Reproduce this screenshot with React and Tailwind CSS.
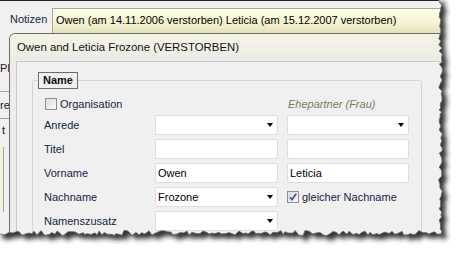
import React from "react";

// torn paper edge on the right and bottom of the screenshot
function tornPath() {
  let s = 11;
  const r = () => (s = (s * 16807) % 2147483647) / 2147483647;
  const pts = [
    [-3, -3],
    [441, -3],
  ];
  for (let y = 0; y <= 231; y += 2 + Math.floor(r() * 3)) pts.push([438.8 + r() * 3.6, y]);
  pts.push([441, 234]);
  for (let x = 437; x >= 0; x -= 2 + Math.floor(r() * 3)) pts.push([x, 230.5 + r() * 5]);
  pts.push([-3, 233]);
  return "M" + pts.map((p) => p[0].toFixed(1) + " " + p[1].toFixed(1)).join("L") + "Z";
}

const TORN = tornPath();

function TornEdge() {
  return (
    <svg className="absolute inset-0 pointer-events-none" width="461" height="255" viewBox="0 0 461 255">
      <defs>
        <mask id="outside">
          <rect x="0" y="0" width="461" height="255" fill="white" />
          <path d={TORN} fill="black" />
        </mask>
        <filter id="soft" x="-10%" y="-10%" width="130%" height="130%">
          <feGaussianBlur stdDeviation="2.4" />
        </filter>
      </defs>
      <path d={"M0 0H461V255H0Z" + TORN} fill="white" fillRule="evenodd" />
      <g mask="url(#outside)">
        <path d={TORN} transform="translate(5 5)" fill="#1a1a1a" opacity="0.9" filter="url(#soft)" />
      </g>
      <path d={TORN} fill="none" stroke="#6a6a6a" strokeWidth="0.8" />
    </svg>
  );
}

function Combo({ value, width }) {
  return (
    <div className={`h-[20px] ${width} flex items-center bg-white border border-[#dedede] rounded-[2px] pl-[2px] pr-[4px]`}>
      <span className="flex-1 text-[11px] text-black">{value}</span>
      <span className="w-0 h-0 border-l-[3.5px] border-r-[3.5px] border-t-[4px] border-l-transparent border-r-transparent border-t-black" />
    </div>
  );
}

function Field({ value, width }) {
  return (
    <div className={`h-[20px] ${width} flex items-center bg-white border border-[#dedede] rounded-[2px] pl-[2px]`}>
      <span className="text-[11px] text-black">{value}</span>
    </div>
  );
}

function Check({ checked }) {
  return (
    <span className="w-[12px] h-[12px] border border-[#8e8f8f] bg-gradient-to-br from-[#dcdcdc] to-[#f8f8f8] flex items-center justify-center">
      {checked && (
        <svg width="10" height="10" viewBox="0 0 10 10">
          <path d="M2 5.2 L4 7.6 L8.2 1.8" fill="none" stroke="#3b55a8" strokeWidth="1.7" />
        </svg>
      )}
    </span>
  );
}

function Row({ label, children }) {
  return (
    <div className="flex items-center h-[20px]">
      <span className="w-[111px] text-[11px] text-[#142446]">{label}</span>
      {children}
    </div>
  );
}

export default function App() {
  return (
    <div className="relative w-[461px] h-[255px] bg-white overflow-hidden font-['Liberation_Sans',Arial,sans-serif]">
      <div className="w-[442px] h-[238px] bg-[#f0f0f0] border-t border-[#222] flex flex-col overflow-hidden">
        {/* window behind the dialog */}
        <div className="h-[32px] shrink-0 flex items-start pt-[7px]">
          <span className="w-[52px] pl-[10px] pt-[3px] text-[11px] text-[#142446]">Notizen</span>
          <div className="flex-1 h-[25px] border-l border-t border-[#a9a99a] bg-gradient-to-b from-[#fcfce4] via-[#f7f6d6] to-[#e4e2bc] pl-[3px] pt-[3px] text-[11px] text-black whitespace-nowrap">
            Owen (am 14.11.2006 verstorben) Leticia (am 15.12.2007 verstorben)
          </div>
        </div>

        <div className="flex flex-1 min-h-0">
          <div className="w-[9px] shrink-0 overflow-hidden text-[11px] text-[#222] leading-[14px] flex flex-col">
            <span className="mt-[28px] whitespace-nowrap">PE</span>
            <span className="mt-[16px] h-px w-full bg-[#a0a0a0]" />
            <span className="mt-[6px]">re</span>
            <span className="mt-[6px] h-px w-full bg-[#a0a0a0]" />
            <span className="mt-[4px] pl-[2px]">t</span>
            <span className="mt-[10px] h-[65px] w-[4px] bg-[#f3f1df] border-r border-[#a8a8a0]" />
          </div>

          {/* dialog */}
          <div className="flex-1 flex flex-col rounded-tl-[6px] border-l border-t border-[#6b6b6b] bg-[#ececec]">
            <div className="h-[27px] shrink-0 flex items-center pl-[7px] rounded-tl-[5px] bg-gradient-to-b from-[#f4f4e4] to-[#ebebe6] text-[11.4px] text-[#111] whitespace-nowrap">
              Owen and Leticia Frozone (VERSTORBEN)
            </div>
            <div className="ml-[6px] flex-1 bg-[#f0f0f0] border-l border-t border-[#cacaca]">
              <div className="relative ml-[15px] mt-[18px] w-[390px] h-[200px] border border-[#d5d5d5] rounded-[3px] pl-[11px] pt-[15px]">
                <div className="absolute left-[5px] top-[-9px] h-[17px] px-[4px] flex items-center border border-[#6d6d6d] bg-[#f0f0f0] text-[11px] font-bold text-[#111]">
                  Name
                </div>
                <div className="flex items-center h-[16px]">
                  <div className="w-[243px] flex items-center gap-[3px] pl-[1px]">
                    <Check />
                    <span className="text-[11px] text-[#142446]">Organisation</span>
                  </div>
                  <span className="text-[11px] italic text-[#7c7b62] pl-[1px]">Ehepartner (Frau)</span>
                </div>
                <div className="mt-[3px] flex flex-col gap-[4px]">
                  <Row label="Anrede">
                    <Combo width="w-[123px]" />
                    <div className="ml-[9px]">
                      <Combo width="w-[122px]" />
                    </div>
                  </Row>
                  <Row label="Titel">
                    <Field width="w-[123px]" />
                    <div className="ml-[9px]">
                      <Field width="w-[122px]" />
                    </div>
                  </Row>
                  <Row label="Vorname">
                    <Field width="w-[123px]" value="Owen" />
                    <div className="ml-[9px]">
                      <Field width="w-[122px]" value="Leticia" />
                    </div>
                  </Row>
                  <Row label="Nachname">
                    <Combo width="w-[123px]" value="Frozone" />
                    <div className="ml-[9px] flex items-center gap-[3px]">
                      <Check checked />
                      <span className="text-[11px] text-[#142446]">gleicher Nachname</span>
                    </div>
                  </Row>
                  <Row label="Namenszusatz">
                    <Combo width="w-[123px]" />
                  </Row>
                </div>
              </div>
            </div>
          </div>
        </div>
      </div>
      <TornEdge />
    </div>
  );
}
